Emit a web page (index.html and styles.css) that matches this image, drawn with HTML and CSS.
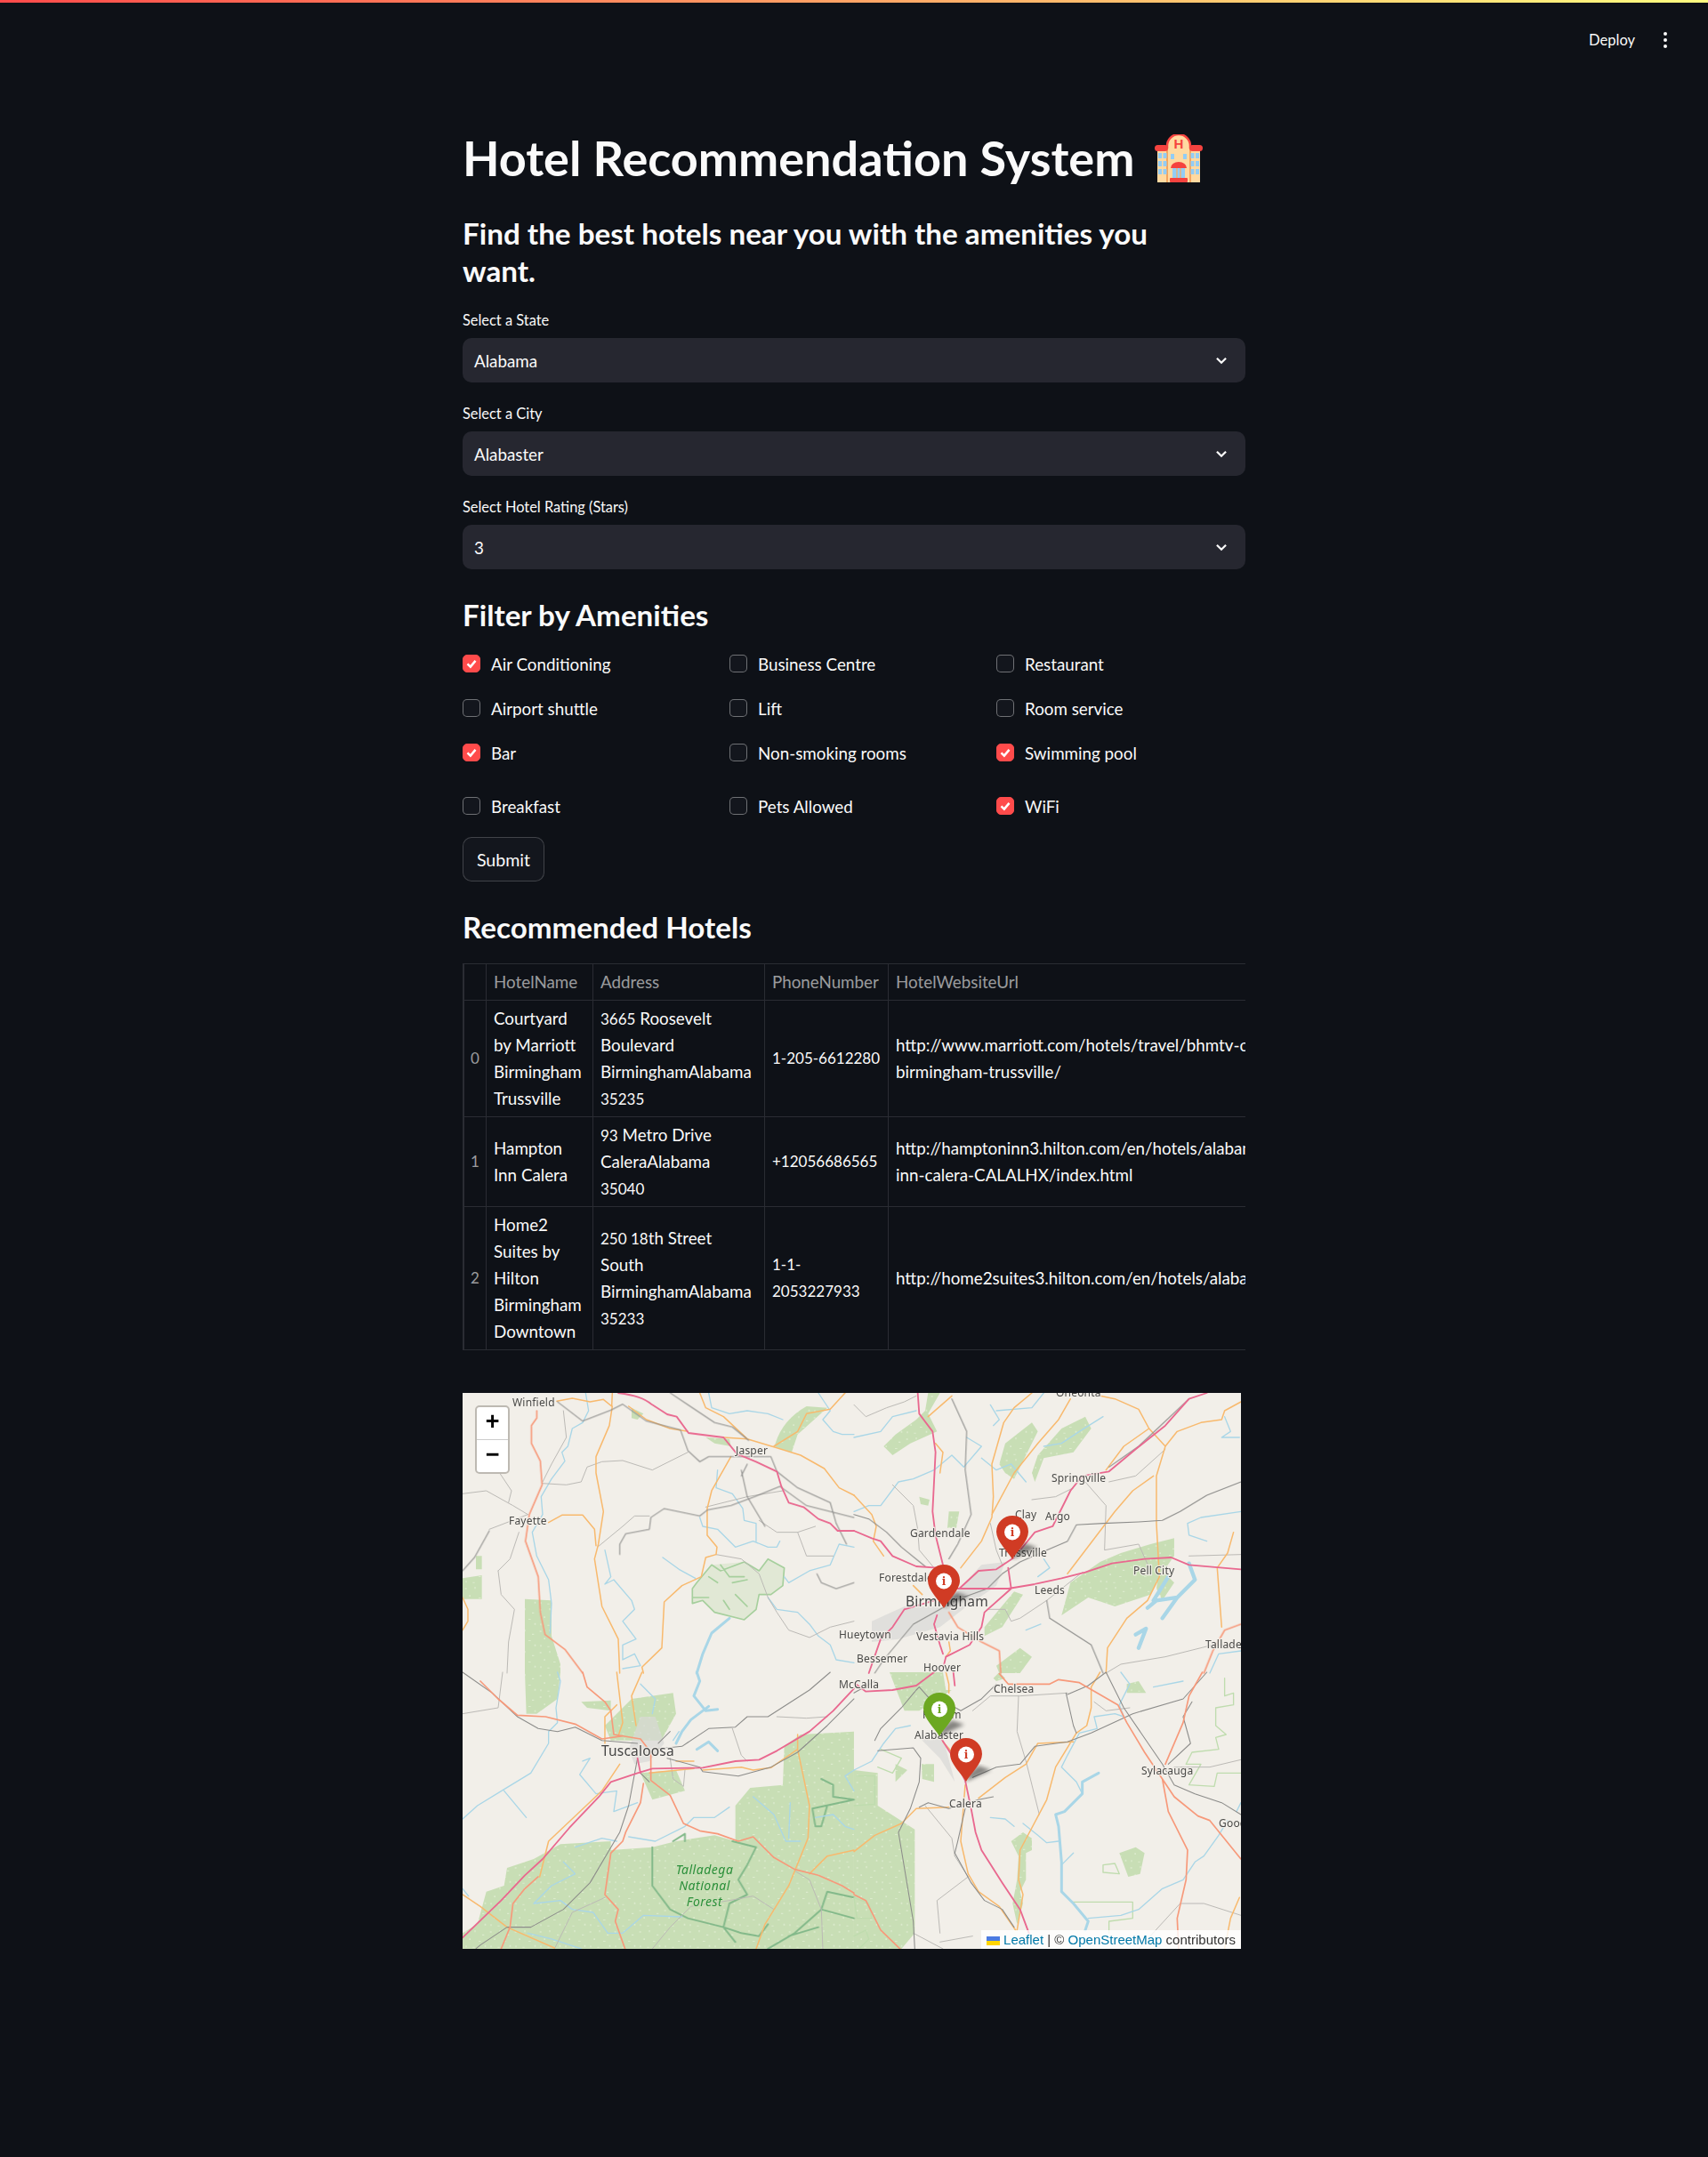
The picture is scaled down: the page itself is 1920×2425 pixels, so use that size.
FILE: index.html
```html
<!DOCTYPE html>
<html lang="en">
<head>
<meta charset="utf-8">
<title>Hotel Recommendation System</title>
<link rel="stylesheet" href="styles.css">
</head>
<body>
<div class="bar"></div>
<header class="topnav">
  <span class="deploy">Deploy</span>
  <span class="kebab"><i></i><i></i><i></i></span>
</header>
<main class="page">
  <h1 class="title">Hotel Recommendation System
    <svg class="emoji" viewBox="0 0 54 54" aria-hidden="true">
      <rect x="3" y="15" width="48" height="39" fill="#ffd9a0"/>
      <path d="M14 54V13a13 13 0 0 1 26 0v41z" fill="#ffd9a0"/>
      <path d="M14 16V13a13 13 0 0 1 26 0v3" fill="none" stroke="#f5433f" stroke-width="2.5"/>
      <path d="M14 16v38M40 16v38" stroke="#f4a55e" stroke-width="2"/>
      <rect x="0" y="12" width="15" height="7" rx="3.5" fill="#f5433f"/>
      <rect x="39" y="12" width="15" height="7" rx="3.5" fill="#f5433f"/>
      <text x="27" y="16" class="emoji-h">H</text>
      <path class="win" d="M4 21h4v6H4zM9.500 21h4v6h-4zM4 30h4v6H4zM9.500 30h4v6h-4zM4 39h4v6H4zM9.500 39h4v6h-4zM40.500 21h4v6h-4zM46 21h4v6h-4zM40.500 30h4v6h-4zM46 30h4v6h-4zM40.500 39h4v6h-4zM46 39h4v6h-4zM18 22h4v6h-4zM32 22h4v6h-4z"/>
      <path d="M18 38a9 7 0 0 1 18 0z" fill="#f5433f"/>
      <rect x="20" y="38" width="14" height="12" fill="#93cdf5"/>
      <path d="M25 38v12M29 38v12" stroke="#e9b27a" stroke-width="1.500"/>
      <rect x="17" y="49" width="20" height="5" rx="1" fill="#f5433f"/>
    </svg>
  </h1>
  <h2 class="subtitle">Find the best hotels near you with the amenities you want.</h2>

  <div class="field">
    <div class="label">Select a State</div>
    <div class="select"><span>Alabama</span><svg class="chev" viewBox="0 0 12 8"><path d="M1.500 1.500 6 6l4.500-4.500"/></svg></div>
  </div>
  <div class="field">
    <div class="label">Select a City</div>
    <div class="select"><span>Alabaster</span><svg class="chev" viewBox="0 0 12 8"><path d="M1.500 1.500 6 6l4.500-4.500"/></svg></div>
  </div>
  <div class="field">
    <div class="label">Select Hotel Rating (Stars)</div>
    <div class="select"><span>3</span><svg class="chev" viewBox="0 0 12 8"><path d="M1.500 1.500 6 6l4.500-4.500"/></svg></div>
  </div>

  <h2 class="section filter">Filter by Amenities</h2>
  <div class="checks">
    <label class="check"><span class="box on"><svg viewBox="0 0 20 20"><path d="M5 10.500 8.700 14 15 6.500"/></svg></span>Air Conditioning</label>
    <label class="check"><span class="box"></span>Business Centre</label>
    <label class="check"><span class="box"></span>Restaurant</label>
    <label class="check"><span class="box"></span>Airport shuttle</label>
    <label class="check"><span class="box"></span>Lift</label>
    <label class="check"><span class="box"></span>Room service</label>
    <label class="check"><span class="box on"><svg viewBox="0 0 20 20"><path d="M5 10.500 8.700 14 15 6.500"/></svg></span>Bar</label>
    <label class="check"><span class="box"></span>Non-smoking rooms</label>
    <label class="check"><span class="box on"><svg viewBox="0 0 20 20"><path d="M5 10.500 8.700 14 15 6.500"/></svg></span>Swimming pool</label>
    <label class="check lastrow"><span class="box"></span>Breakfast</label>
    <label class="check lastrow"><span class="box"></span>Pets Allowed</label>
    <label class="check lastrow"><span class="box on"><svg viewBox="0 0 20 20"><path d="M5 10.500 8.700 14 15 6.500"/></svg></span>WiFi</label>
  </div>
  <button class="submit">Submit</button>

  <h2 class="section recommended">Recommended Hotels</h2>
  <div class="tablewrap">
    <table class="hotels">
      <colgroup><col class="c0"><col class="c1"><col class="c2"><col class="c3"><col class="c4"></colgroup>
      <thead><tr><th></th><th>HotelName</th><th>Address</th><th>PhoneNumber</th><th>HotelWebsiteUrl</th></tr></thead>
      <tbody>
        <tr><th>0</th><td>Courtyard<br>by Marriott<br>Birmingham<br>Trussville</td><td><span class="num">3665</span> Roosevelt<br>Boulevard<br>BirminghamAlabama<br><span class="num">35235</span></td><td class="num">1-205-6612280</td><td>http://www.marriott.com/hotels/travel/bhmtv-courtyard-<br>birmingham-trussville/</td></tr>
        <tr><th>1</th><td>Hampton<br>Inn Calera</td><td><span class="num">93</span> Metro Drive<br>CaleraAlabama<br><span class="num">35040</span></td><td class="num">+12056686565</td><td>http://hamptoninn3.hilton.com/en/hotels/alabama/hampton-<br>inn-calera-CALALHX/index.html</td></tr>
        <tr><th>2</th><td>Home2<br>Suites by<br>Hilton<br>Birmingham<br>Downtown</td><td><span class="num">250 18</span>th Street<br>South<br>BirminghamAlabama<br><span class="num">35233</span></td><td class="num">1-1-<br>2053227933</td><td>http://home2suites3.hilton.com/en/hotels/alabama/home2</td></tr>
      </tbody>
    </table>
  </div>

  <div class="map">
    <svg class="mapsvg" viewBox="0 0 875 625" width="875" height="625">
      <defs>
        <filter id="soft"><feGaussianBlur stdDeviation="0.4"/></filter>
        <filter id="shade"><feGaussianBlur stdDeviation="2"/></filter>
        <pattern id="speck" width="84" height="72" patternUnits="userSpaceOnUse">
          <rect width="84" height="72" fill="#c8deb5"/>
          <path d="M8 10h6v4H8zM40 6h4v7h-4zM66 20h7v4h-7zM22 34h5v5h-5zM54 42h8v3h-8zM10 58h4v6h-4zM74 56h5v6h-5zM34 62h7v3h-7z" fill="#dcebcd"/>
        </pattern>
      </defs>
      <g filter="url(#soft)">
        <!-- land cover -->
        <path fill="url(#speck)" transform="scale(.3333)" d="M210 695L300 700L300 820L330 915L330 945L210 945ZM0 625L65 615V695L0 695ZM45 550H65V595H45ZM1055 170Q1080 90 1160 45L1230 50L1130 140L1110 200L1050 180ZM570 50L610 70L590 90L570 85ZM820 150L900 155L905 180L850 170Z"/>
        <path class="patchy" transform="scale(.3333)" d="M790 640L840 580L950 570L1000 600L1030 560L1085 590L1080 650L1040 680L1000 680L990 730L950 765L850 740L810 700L775 710V660Z"/>
        <path fill="url(#speck)" transform="translate(440,0) scale(.3333)" d="M490 240L510 170L600 100L620 130L540 290L510 270ZM600 270L620 210L700 120L780 80L800 120L740 200L640 220L610 300ZM700 750L730 640L830 570L900 540L1000 510L1080 490L1080 550L1030 620L1000 680L880 720L790 690ZM100 180L140 140L210 90L240 60L250 0L290 0L250 70L280 130L190 170L130 210ZM320 400H355L345 455H315ZM220 350L255 360L250 380L225 375ZM440 790L540 670L570 680L500 790L440 820ZM480 920L560 860L600 890L560 945L490 945ZM1030 590L1080 640L1040 700L1020 660Z"/>
        <path fill="url(#speck)" transform="translate(0,314) scale(.3333)" d="M0 880L50 850L80 740L140 720L150 660L240 630L330 580L500 570L500 600L640 590L720 570L850 550L920 570L920 450L970 390L1080 380L1085 250L1140 210L1320 200L1320 933L0 933ZM210 0H330L320 90L250 140L215 140ZM400 100L500 95L500 130L420 120ZM480 180L570 90L710 70L720 140L670 230L500 230ZM600 340L720 330L750 400L640 430Z"/>
        <path fill="url(#speck)" transform="translate(440,314) scale(.3333)" d="M0 330L80 340L80 450L205 530L205 880L160 933L0 933ZM530 570L570 540L600 560L600 600L580 610L580 700L560 740L570 780L550 850L535 780L550 700L555 620ZM895 610L950 590L980 610L965 680L925 690ZM920 40L960 30L985 70L920 70ZM470 20L490 0L510 20L480 30ZM228 310L270 310L270 370L230 360ZM140 310L180 330L140 370ZM120 0L300 0L310 60L330 60L220 130L170 130Z"/>
        <path class="urban" transform="translate(440,0) scale(.3333)" d="M60 770L170 720L300 720L430 580L510 570L480 650L380 720L290 790L150 830L60 840Z"/>
        <path class="urban" transform="translate(0,314) scale(.3333)" d="M560 260L600 150L650 150L680 240L630 300L580 310Z"/>
        <path class="urban" transform="translate(440,314) scale(.3333)" d="M210 210L300 220L340 370L290 290Z"/>
        <path class="bound soft" transform="scale(.3333)" d="M790 640L840 580L870 600L950 570L1000 600L1030 560L1085 590L1080 650L1040 680L1000 680L990 730L950 765L850 740L810 700L775 710V660ZM870 580L900 620L950 620M910 640L960 630M920 680L960 720M830 620L860 640M880 700L900 730M775 690H830"/>
        <path class="bound" transform="translate(0,314) scale(.3333)" d="M640 590V720L700 800L760 830L880 860L940 880L1000 890L1030 850M710 570L750 545V570M910 570L990 590L960 650L930 700L960 750L900 780L880 860L920 910M1210 360L1250 380V420L1320 430L1180 460L1190 520H1210L1230 450M1030 933L1120 880L1210 800L1230 740L1320 760M1210 800L1320 830M1100 890L1200 860"/>
        <path class="bound lite" transform="translate(440,314) scale(.3333)" d="M1250 20V80L1280 70V110L1220 120V180L1255 210L1220 220L1230 260L1140 270L1120 310L1170 310L1130 380L1215 385L1225 340L1305 340M840 650L880 645L895 680L840 675ZM735 775H940V830L860 840V880M0 760L50 780L60 830L10 830ZM90 260L160 290L130 340L80 320M10 350L70 350L70 445L0 450M0 890L40 870L50 900L20 930"/>
        <!-- water -->
        <path class="water" transform="scale(.3333)" d="M415 0L425 60L405 100L370 120L355 180L335 200L345 230L300 290L265 350L270 410L235 470L250 550L290 630L300 710L295 810M480 530L500 620L480 645L510 630L570 700L580 730L540 770L585 830L540 850L540 900L580 880L600 920L540 930M675 555L730 595L785 625M800 420L810 450L860 460L920 520L980 500L1030 520L1060 520L1070 500M1200 0L1240 60L1215 90L1250 130L1280 140L1320 140M830 0L840 50L900 70L960 60L1030 70L1080 90M860 260L855 320L910 340L945 390L950 430L990 440L990 500M1030 690L1060 730L1130 740L1170 780L1200 820L1240 850L1260 900L1320 910M1320 520L1270 510L1240 580L1170 600L1100 640L1085 620"/>
        <path class="water wide" transform="scale(.3333)" d="M900 760L840 810L810 880L790 945"/>
        <path class="water" transform="translate(440,0) scale(.3333)" d="M0 150L90 130L130 80L210 60M430 220L480 260L530 240L580 300M0 400L50 380L90 380L150 300L200 290L270 260L330 210L370 250L430 180L380 150M460 40L490 90L470 110M640 0L600 50L480 60M640 180L700 170L760 130L840 80M1305 400L1170 420L1125 440L1130 480L1190 500M1250 80L1270 130L1240 150L1300 150M640 560L660 590L620 620M580 800L630 780M1305 870L1230 880L1200 945"/>
        <path class="water lakeline" transform="translate(440,0) scale(.3333)" d="M1130 575L1150 630L1090 690L1040 760M1090 690L1020 700L990 725M1060 620L1010 700M950 815L985 795L960 860"/>
        <path class="water" transform="translate(0,314) scale(.3333)" d="M320 0L330 30L315 120L320 170L290 200L290 240L230 340L140 395L50 450L0 495M140 400L215 490M405 300L430 290L395 345L450 410L520 400L510 470L590 440M900 455L850 490L780 490L750 520L650 570L560 555M380 590L470 560L520 570M340 640L380 680L300 720L240 780L330 770L370 800L440 810L490 880L540 880L610 820L740 825M980 420L1050 480L1090 570L1140 570M1105 440L1100 560M600 40L650 90L640 140M730 200L710 230M0 730L20 755M220 880L300 900L400 933M1320 400L1290 350L1320 330M1190 490L1250 480L1290 520L1320 530"/>
        <path class="water wide" transform="translate(0,314) scale(.3333)" d="M790 0L800 30L780 80L820 130L860 125M830 115L770 160L740 200L720 240M790 260L830 235L860 265"/>
        <path class="water" transform="translate(440,314) scale(.3333)" d="M760 205L720 280L700 320L750 370L770 410M460 490L510 495L540 520M570 510L620 550L650 575L690 570M700 650L740 610M790 830L900 820L960 800L1040 730L1110 700L1150 640L1180 620L1230 550L1260 500M900 0L930 40L895 110L910 150L880 140L810 150L820 190L760 205M0 330L60 300L100 240L140 190L190 180M1010 50L1110 30M1305 440L1290 470"/>
        <path class="water wide" transform="translate(440,314) scale(.3333)" d="M825 340L770 370L770 410L710 470L680 480L690 520L700 640L700 740L740 780L790 840L780 870"/>
        <!-- minor roads -->
        <path class="light" transform="scale(.3333)" d="M268 305L350 310L400 300L420 250L470 232L540 228L640 260L690 235L760 200M0 340L80 330L170 380L220 410M220 410L90 460M455 520L540 450L580 415L630 415M120 600L160 560L190 470M120 600L130 680L175 730L155 840L150 945M125 270L165 330L155 370M340 60L350 150L300 240L270 300M820 385L960 350L1080 330M855 545L940 560L1000 610L1030 690L1060 740L1100 800L1170 825L1240 790L1320 770M1130 470L1160 550L1250 550M1000 430L1060 470L1130 470L1190 450"/>
        <path class="light" transform="translate(440,0) scale(.3333)" d="M0 40L40 80L110 50L170 30L210 10M130 310L200 380L215 460L220 530L270 590M460 440L480 530L500 580M780 300L850 380L845 530L960 510L1000 600M600 360L680 350L740 320M450 730L510 730L530 770L560 760L650 700L770 605M1305 545L1130 550M850 945L900 915L1050 890L1170 860L1210 850L1305 850M1050 190L950 280L860 300"/>
        <path class="light" transform="translate(0,314) scale(.3333)" d="M0 140L120 120L135 0M910 190L940 280L960 300M1060 150L1160 155L1230 150M310 933L370 810L480 760M640 933L700 860L770 790L900 770L980 755L1050 800M1120 670L1170 700L1210 800L1215 933M700 290L710 360L745 385L750 330"/>
        <path class="light" transform="translate(440,314) scale(.3333)" d="M555 80L550 200L580 300L610 420L625 480M240 450L330 560L340 620M340 620L385 690L280 770L290 880M200 880L300 933M400 890L290 910M810 100L850 130L930 120M960 933L1100 780L1180 780L1305 820M1080 320L1200 320L1305 295M720 70L560 80L460 80L400 130"/>
        <!-- secondary roads -->
        <path class="orange" transform="scale(.3333)" d="M318 28L370 18L430 30L475 22L503 45L505 0M505 45L495 110L450 215L450 270L475 400L458 510L445 560L470 720L525 830L530 945M560 45L620 90L700 120L760 130M800 0L820 50L880 80L960 155L1060 185L1140 210L1220 255L1270 320L1320 345M1050 180L1130 130L1160 70L1240 55L1290 0M905 215L840 330L825 390L825 480L858 520L855 545L820 555L805 620L740 650L680 705L672 860L605 925L610 945M290 437L335 412L405 412L445 460L450 515M0 690L18 730L18 770L0 800M880 150L960 155"/>
        <path class="orange" transform="translate(440,0) scale(.3333)" d="M0 345L60 410L75 450L65 500L100 550M600 0L540 50L505 100L465 240L470 350L465 420L430 500L360 590M730 20L690 90L620 170L540 270L465 410M830 10L880 20L960 55L995 120L1050 180L1020 280L1020 440L1030 620L990 700L920 760L855 860L850 945M1305 30L1250 60L1240 90L1170 100L1090 130L1050 180M995 120L910 180L850 260M1010 280L940 330L880 400L720 610M250 80L330 10M275 170L300 200L290 270M1280 470L1260 540L1225 590L1240 790M320 840L325 870L310 890M200 650L230 680"/>
        <path class="orange" transform="translate(0,314) scale(.3333)" d="M520 0L540 170L525 215M605 0L570 80L585 180M530 310L470 400L290 570L260 690M0 750L60 790L150 860L310 930M1130 210L1130 260L1170 450L1165 560L1100 720L1020 850L990 933M810 330L940 320L980 330L1040 322L1130 260M630 340L780 325M720 300L780 300M1170 680L1230 620L1320 600M520 110L480 150L480 240"/>
        <path class="orange" transform="translate(440,314) scale(.3333)" d="M310 0L320 40L320 70M830 0L800 50L800 120L785 180L750 205L680 320L650 430L560 600L555 700L570 750L550 870M300 235L340 280M0 605L70 550L160 510L210 460L320 455M420 425L510 355L580 310L620 240L740 235M375 380L360 570L385 680L420 740L490 790L545 870M1300 760L1270 830L1250 933"/>
        <!-- railways / dark roads -->
        <path class="dark" transform="scale(.3333)" d="M320 30L405 95L500 58L540 38L620 95L735 125L760 195L800 232L830 215L900 215L1040 215L1060 265L1130 320L1240 370L1260 440L1295 510M700 0L760 40L850 100L910 115L965 160M1320 420L1240 400L1160 380L1070 315L985 350L905 380L825 395L800 415L680 390L635 420L630 460L550 475L530 510L530 545M0 600L40 555L90 465M940 260L960 350L1020 450M960 240L940 280M1195 610L1210 640L1260 660L1320 640"/>
        <path class="dark" transform="translate(440,0) scale(.3333)" d="M330 20L380 130L375 260L395 410L350 510L320 560M0 410L50 425L110 470L160 520L240 585M1305 300L1190 345L1100 400L1040 430L960 435L840 440L750 445L720 500L650 530L560 570L500 610L450 660L340 700L290 730L200 780L100 900L70 945M650 700L660 760L800 850L840 945M1130 20L960 180L860 250"/>
        <path class="dark" transform="translate(0,314) scale(.3333)" d="M0 0L100 70L185 150L255 190L320 200L380 185L470 230L590 240M640 260L740 250L830 190L920 185L960 150L1030 150L1170 60L1240 0M690 290L800 320L810 335L930 350L1040 320L1130 270L1230 180L1320 90M590 290L560 450L530 540L430 710L340 800L230 860L150 860L60 920L45 933M660 240L700 200M600 340L630 370"/>
        <path class="dark" transform="translate(440,314) scale(.3333)" d="M375 460L350 570L340 610L395 710L440 770L500 800L540 860M70 230L90 190L160 120L210 60L220 50L300 140M80 265L200 255L225 290L220 370L190 460L150 540L160 600L200 840L205 933M720 75L790 45L850 0M220 455L250 440L320 460L420 430L470 420M400 355L480 320L560 310L610 250L720 235L800 205L940 140L1110 90L1190 0M850 0L910 120L1040 310L1080 380L1150 410L1240 440L1305 480M715 70L740 180L750 205M1060 310L1135 240L1110 150L1140 100M290 90L360 130L430 90L480 40M0 70L70 30"/>
        <!-- trunk roads -->
        <path class="salmon" transform="scale(.3333)" d="M250 60L250 85L232 110L232 170L262 230L268 310L225 410L212 500L255 620L262 740L278 815L345 865L405 945"/>
        <path class="salmon" transform="translate(440,0) scale(.3333)" d="M320 740L350 790L430 840L490 870L495 945M1305 780L1250 800L1210 870L1180 945"/>
        <path class="salmon" transform="translate(0,314) scale(.3333)" d="M405 0L420 50L480 100L500 130L510 210L600 225L635 270L635 365L700 415L745 510L800 535L860 545L930 570L980 555L1050 625L1120 665L1200 685L1280 720L1320 745M60 30L120 90L185 145L280 150L380 175L470 225L540 215M610 375L600 440L550 540L540 570L500 610L480 750L525 800L515 840L548 933M255 690L210 730L170 780L160 860L130 933"/>
        <path class="salmon" transform="translate(440,314) scale(.3333)" d="M490 5L520 40L660 40L690 25L760 35L890 110L920 170L980 270L1040 360L1080 420L1160 485L1200 500L1305 630M1040 360L1060 470L1125 600L1120 700L1090 830L1095 933M1175 0L1130 80L1110 170L1050 310M0 750L40 770L90 870L155 933"/>
        <!-- motorways -->
        <path class="pink" transform="scale(.3333)" d="M525 0C580 8 610 15 640 40L690 72L722 80L762 135L880 150L925 205L990 232L1060 265L1075 315L1100 370L1150 385L1200 425L1240 440L1265 465L1320 465"/>
        <path class="pink" transform="translate(440,0) scale(.3333)" d="M0 465L60 490L90 500L130 550L210 585L280 590M215 0L220 70L265 130L275 200L265 400L275 480L300 580M355 660L420 600L480 595L540 555L610 470L670 450L730 330L770 280L860 265L950 190L1050 110L1130 20L1190 0M520 590L530 660L440 740L430 790L390 850L310 890L300 930M280 750L270 780L290 850L300 880M350 660L520 660L610 645L700 625L780 605L870 575L980 560L1070 555L1130 580L1305 595M170 730L270 700M50 945L90 830L130 790L170 730"/>
        <path class="pink" transform="translate(0,314) scale(.3333)" d="M1320 55L1250 130L1170 200L1060 265L1000 295L920 300L810 322L640 325L590 340L500 370L460 420L360 525L270 630L210 685L130 770L0 895M590 290L600 340"/>
        <path class="pink" transform="translate(440,314) scale(.3333)" d="M0 35L40 65L130 60L210 45L270 0M335 0L340 45M295 225L330 280L375 365L395 460L410 540L430 600L500 710L560 800L590 880"/>
      </g>
      <!-- place names -->
      <g class="places">
        <text x="56" y="15">Winfield</text>
        <text x="52" y="148">Fayette</text>
        <text x="307" y="69">Jasper</text>
        <text x="423" y="276">Hueytown</text>
        <text x="468" y="212">Forestdale</text>
        <text x="503" y="162">Gardendale</text>
        <text x="621" y="141">Clay</text>
        <text x="655" y="143">Argo</text>
        <text x="603" y="184">Trussville</text>
        <text x="662" y="100">Springville</text>
        <text x="667" y="4">Oneonta</text>
        <text x="643" y="226">Leeds</text>
        <text x="754" y="204">Pell City</text>
        <text x="510" y="278">Vestavia Hills</text>
        <text x="443" y="303">Bessemer</text>
        <text x="518" y="313">Hoover</text>
        <text x="835" y="287">Talladega</text>
        <text x="423" y="332">McCalla</text>
        <text x="597" y="337">Chelsea</text>
        <text x="517" y="366">Pelham</text>
        <text x="508" y="389">Alabaster</text>
        <text x="547" y="466">Calera</text>
        <text x="763" y="429">Sylacauga</text>
        <text x="850" y="488">Goodwater</text>
        <text class="big" x="498" y="240">Birmingham</text>
        <text class="big" x="156" y="408">Tuscaloosa</text>
        <text class="forestname" x="272" y="541">Talladega</text>
        <text class="forestname" x="272" y="559">National</text>
        <text class="forestname" x="272" y="577">Forest</text>
      </g>
      <!-- markers -->
      <g class="pin red" transform="translate(618,187)">
        <path class="pinshadow" d="M0 0 28 -13 14 -18 4 -10z"/>
        <path class="pinbody" d="M0 0C-5 -9 -18 -20 -18 -31A18 18 0 1 1 18 -31C18 -20 5 -9 0 0Z"/>
        <circle cx="0" cy="-30.500" r="9"/><text x="0" y="-26.500">i</text>
      </g>
      <g class="pin red" transform="translate(541,242)">
        <path class="pinshadow" d="M0 0 28 -13 14 -18 4 -10z"/>
        <path class="pinbody" d="M0 0C-5 -9 -18 -20 -18 -31A18 18 0 1 1 18 -31C18 -20 5 -9 0 0Z"/>
        <circle cx="0" cy="-30.500" r="9"/><text x="0" y="-26.500">i</text>
      </g>
      <g class="pin green" transform="translate(536,386)">
        <path class="pinshadow" d="M0 0 28 -13 14 -18 4 -10z"/>
        <path class="pinbody" d="M0 0C-5 -9 -18 -20 -18 -31A18 18 0 1 1 18 -31C18 -20 5 -9 0 0Z"/>
        <circle cx="0" cy="-30.500" r="9"/><text x="0" y="-26.500">i</text>
      </g>
      <g class="pin red" transform="translate(566,437)">
        <path class="pinshadow" d="M0 0 28 -13 14 -18 4 -10z"/>
        <path class="pinbody" d="M0 0C-5 -9 -18 -20 -18 -31A18 18 0 1 1 18 -31C18 -20 5 -9 0 0Z"/>
        <circle cx="0" cy="-30.500" r="9"/><text x="0" y="-26.500">i</text>
      </g>
    </svg>
    <div class="zoomctl">
      <span class="zbtn">+</span>
      <span class="zbtn">&#8722;</span>
    </div>
    <div class="attrib"><svg class="flag" viewBox="0 0 15 10"><rect width="15" height="5" fill="#4c7be1"/><rect y="5" width="15" height="5" fill="#ffd500"/></svg> <a>Leaflet</a> | © <a>OpenStreetMap</a> contributors</div>
  </div>
</main>
</body>
</html>
```
FILE: styles.css
```css
* { box-sizing: border-box; }
html, body { margin: 0; padding: 0; }
body {
  background: #0e1117;
  color: #fafafa;
  font-family: "Lato", "Noto Sans", sans-serif;
  min-height: 2425px;
  font-size: 18.8px;
}
.bar { height: 3px; background: linear-gradient(90deg, #ff4b4b, #fffd80); }
.topnav { height: 84px; display: flex; align-items: center; justify-content: flex-end; padding-right: 46px; gap: 32px; }
.deploy { font-size: 16.5px; }
.kebab { display: flex; flex-direction: column; gap: 3px; }
.kebab i { display: block; width: 4px; height: 4px; border-radius: 50%; background: #fafafa; }

.page { width: 880px; margin: 0 auto; padding-top: 56px; }
.title { margin: 0; height: 70px; font-size: 54px; line-height: 70px; font-weight: 700; display: flex; align-items: center; gap: 23px; white-space: nowrap; }
.emoji { width: 54px; height: 54px; flex: none; }
.emoji-h { font: 700 15px "Liberation Sans", sans-serif; fill: #f5433f; text-anchor: middle; }
.win { fill: #93cdf5; }
.subtitle { margin: 28px 0 0; width: 810px; font-size: 33.2px; line-height: 42px; font-weight: 700; }
.section { margin: 0; font-size: 33.2px; line-height: 42px; font-weight: 700; }
.filter { margin-top: 30px; }
.recommended { margin-top: 30px; }

.field { margin-top: 25px; }
.subtitle + .field { margin-top: 25px; }
.label { font-size: 16.4px; line-height: 20px; margin-bottom: 10px; }
.select { height: 50px; border-radius: 10px; background: #262730; display: flex; align-items: center; justify-content: space-between; padding: 0 20px 0 13px; }
.chev { width: 14px; height: 9px; }
.chev path { fill: none; stroke: #fafafa; stroke-width: 2; }

.checks { display: grid; grid-template-columns: repeat(3, 300px); grid-auto-rows: 30px; row-gap: 20px; margin-top: 19px; }
.check { display: flex; align-items: center; gap: 12px; height: 30px; }
.lastrow { position: relative; top: 10px; }
.box { width: 20px; height: 20px; border-radius: 5px; border: 1px solid rgba(250,250,250,.4); background: #13161d; flex: none; }
.box.on { background: #ff4b4b; border-color: #ff4b4b; }
.box svg { display: block; width: 18px; height: 18px; }
.box path { fill: none; stroke: #fff; stroke-width: 2.8; }

.submit { display: block; margin-top: 30px; width: 92px; height: 50px; border-radius: 10px; border: 1px solid rgba(250,250,250,.2); background: #13161d; color: #fafafa; font: inherit; font-size: 19.6px; padding: 0; }

.tablewrap { margin-top: 20px; width: 880px; overflow: hidden; border-left: 1px solid #2a2c33; }
.hotels { border-collapse: collapse; table-layout: fixed; width: 1300px; font-size: 18.8px; line-height: 30px; }
.c0 { width: 25px; } .c1 { width: 120px; } .c2 { width: 193px; } .c3 { width: 139px; } .c4 { width: 823px; }
.hotels th, .hotels td { border: 1px solid #2a2c33; padding: 5px 8px; vertical-align: middle; text-align: left; font-weight: 400; white-space: nowrap; overflow: hidden; }
.hotels thead th { height: 41px; color: rgba(250,250,250,.6); }
.hotels tbody th { color: rgba(250,250,250,.6); padding: 0; text-align: center; font-size: 17px; }
.hotels .num { font-size: 17px; }
.hotels span.num { line-height: 1; }

.map { position: relative; width: 875px; height: 625px; margin-top: 48px; background: #f2efe9; overflow: hidden; }
.mapsvg { display: block; }
.patchy { fill: rgba(201,223,182,.4); }
.urban { fill: #d9d9d6; opacity: .7; }
.bound, .water, .light, .orange, .dark, .salmon, .pink { fill: none; stroke-linejoin: round; stroke-linecap: round; }
.bound { stroke: #83b98a; stroke-width: 6; }
.bound.soft { stroke: #a6cf9d; stroke-width: 5; }
.bound.lite { stroke: #bfdcae; stroke-width: 4; }
.water { stroke: #a9d6e7; stroke-width: 4; }
.water.wide { stroke-width: 9; }
.water.lakeline { stroke-width: 13; }
.light { stroke: #bbb9b5; stroke-width: 3; }
.orange { stroke: #f8b96d; stroke-width: 4.5; }
.dark { stroke: #8c8c8a; stroke-width: 3.2; }
.salmon { stroke: #f7997a; stroke-width: 5; }
.pink { stroke: #e9688f; stroke-width: 5.5; }
.places text { font: 12px "Noto Sans", sans-serif; fill: #4a4a48; stroke: rgba(242,239,233,.85); stroke-width: 2.5px; paint-order: stroke; letter-spacing: .2px; }
.places .big { font-size: 15.5px; fill: #444; }
.places .forestname { font-size: 14px; font-style: italic; fill: #2b8f3a; text-anchor: middle; stroke: rgba(201,223,182,.8); letter-spacing: .5px; }
.pinbody { stroke: none; }
.pinshadow { fill: rgba(0,0,0,.45); filter: url(#shade); }
.pin.red .pinbody { fill: #d03b24; }
.pin.green .pinbody { fill: #6ca820; }
.pin circle { fill: #fff; }
.pin text { font: 700 12px "DejaVu Serif", serif; text-anchor: middle; }
.pin.red text { fill: #d03b24; }
.pin.green text { fill: #6ca820; }

.zoomctl { position: absolute; left: 14px; top: 14px; width: 39px; height: 77px; border: 2px solid #bdb9b2; border-radius: 5px; background: #fff; display: flex; flex-direction: column; overflow: hidden; }
.zbtn { flex: 1; display: flex; align-items: center; justify-content: center; color: #000; font: 700 27px "Liberation Mono", monospace; }
.zbtn + .zbtn { border-top: 1px solid #ccc; }
.attrib { position: absolute; right: 0; bottom: 0; height: 21px; padding: 0 6px; background: rgba(255,255,255,.8); color: #333; font: 15px/21px "Liberation Sans", sans-serif; white-space: pre; }
.attrib a { color: #0078a8; }
.flag { display: inline-block; width: 15px; height: 10px; vertical-align: -0.5px; }
```
